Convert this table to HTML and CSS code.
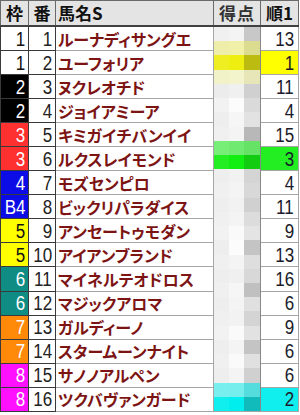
FILE: index.html
```html
<!DOCTYPE html>
<html lang="ja">
<head>
<meta charset="utf-8">
<link rel="stylesheet" href="styles.css">
</head>
<body>
<table class="sheet">
  <colgroup>
    <col class="c-waku"><col class="c-ban"><col class="c-name"><col class="c-score"><col class="c-rank">
  </colgroup>
  <thead>
    <tr>
      <th class="h-waku">枠</th>
      <th class="h-ban">番</th>
      <th class="h-name">馬名S</th>
      <th class="h-score">得点</th>
      <th class="h-rank">順1</th>
    </tr>
  </thead>
  <tbody>
    <tr>
      <td class="waku w1"><span class="num">1</span></td>
      <td class="ban"><span class="num">1</span></td>
      <td class="name">ルーナディサングエ</td>
      <td class="score" rowspan="16">
        <div class="mosaic">
          <i style="background:#f0f0f0"></i><i style="background:#f4f4f4"></i><i style="background:#c8c8c8"></i>
          <i style="background:#eeeeaa"></i><i style="background:#f0f0a8"></i><i style="background:#dcdc90"></i>
          <i style="background:#eeee22"></i><i style="background:#eeee11"></i><i style="background:#bbbb11"></i>
          <i style="background:#f2f2c8"></i><i style="background:#f4f4cc"></i><i style="background:#e6e6b8"></i>
          <i style="background:#ececec"></i><i style="background:#f0f0f0"></i><i style="background:#d0d0d0"></i>
          <i style="background:#f2f2f2"></i><i style="background:#fcfcfc"></i><i style="background:#dadada"></i>
          <i style="background:#eeeeee"></i><i style="background:#f6f6f6"></i><i style="background:#e2e2e2"></i>
          <i style="background:#f0f0f0"></i><i style="background:#f4f4f4"></i><i style="background:#b8b8b8"></i>
          <i style="background:#77ee77"></i><i style="background:#70ea70"></i><i style="background:#66e266"></i>
          <i style="background:#22ee22"></i><i style="background:#11ee11"></i><i style="background:#11cc11"></i>
          <i style="background:#eeeeee"></i><i style="background:#f2f2f2"></i><i style="background:#d4d4d4"></i>
          <i style="background:#f0f0f0"></i><i style="background:#f4f4f4"></i><i style="background:#d8d8d8"></i>
          <i style="background:#eeeeee"></i><i style="background:#f2f2f2"></i><i style="background:#d0d0d0"></i>
          <i style="background:#f0f0f0"></i><i style="background:#f4f4f4"></i><i style="background:#dcdcdc"></i>
          <i style="background:#f2f2f2"></i><i style="background:#fafafa"></i><i style="background:#e4e4e4"></i>
          <i style="background:#eeeeee"></i><i style="background:#fcfcfc"></i><i style="background:#c4c4c4"></i>
          <i style="background:#f0f0f0"></i><i style="background:#f4f4f4"></i><i style="background:#dedede"></i>
          <i style="background:#eeeeee"></i><i style="background:#f0f0f0"></i><i style="background:#d8d8d8"></i>
          <i style="background:#f0f0f0"></i><i style="background:#f6f6f6"></i><i style="background:#c0c0c0"></i>
          <i style="background:#eeeeee"></i><i style="background:#f4f4f4"></i><i style="background:#e0e0e0"></i>
          <i style="background:#f0f0f0"></i><i style="background:#f2f2f2"></i><i style="background:#d4d4d4"></i>
          <i style="background:#f2f2f2"></i><i style="background:#fafafa"></i><i style="background:#e2e2e2"></i>
          <i style="background:#eeeeee"></i><i style="background:#f4f4f4"></i><i style="background:#c4c4c4"></i>
          <i style="background:#f0f0f0"></i><i style="background:#fafafa"></i><i style="background:#e0e0e0"></i>
          <i style="background:#eeeeee"></i><i style="background:#f4f4f4"></i><i style="background:#d0d0d0"></i>
          <i style="background:#78eeee"></i><i style="background:#77eeee"></i><i style="background:#55dddd"></i>
          <i style="background:#11eeee"></i><i style="background:#00eeee"></i><i style="background:#11bbbb"></i>
        </div>
      </td>
      <td class="rank"><span class="num">13</span></td>
    </tr>
    <tr>
      <td class="waku w1"><span class="num">1</span></td>
      <td class="ban"><span class="num">2</span></td>
      <td class="name">ユーフォリア</td>
      <td class="rank r-yellow"><span class="num">1</span></td>
    </tr>
    <tr>
      <td class="waku w2"><span class="num">2</span></td>
      <td class="ban"><span class="num">3</span></td>
      <td class="name">ヌクレオチド</td>
      <td class="rank"><span class="num">11</span></td>
    </tr>
    <tr>
      <td class="waku w2"><span class="num">2</span></td>
      <td class="ban"><span class="num">4</span></td>
      <td class="name">ジョイアミーア</td>
      <td class="rank"><span class="num">4</span></td>
    </tr>
    <tr>
      <td class="waku w3"><span class="num">3</span></td>
      <td class="ban"><span class="num">5</span></td>
      <td class="name">キミガイチバンイイ</td>
      <td class="rank"><span class="num">15</span></td>
    </tr>
    <tr>
      <td class="waku w3"><span class="num">3</span></td>
      <td class="ban"><span class="num">6</span></td>
      <td class="name">ルクスレイモンド</td>
      <td class="rank r-green"><span class="num">3</span></td>
    </tr>
    <tr>
      <td class="waku w4"><span class="num">4</span></td>
      <td class="ban"><span class="num">7</span></td>
      <td class="name">モズセンピロ</td>
      <td class="rank"><span class="num">4</span></td>
    </tr>
    <tr>
      <td class="waku w4"><span class="num">B4</span></td>
      <td class="ban"><span class="num">8</span></td>
      <td class="name">ビックリパラダイス</td>
      <td class="rank"><span class="num">11</span></td>
    </tr>
    <tr>
      <td class="waku w5"><span class="num">5</span></td>
      <td class="ban"><span class="num">9</span></td>
      <td class="name">アンセートゥモダン</td>
      <td class="rank"><span class="num">9</span></td>
    </tr>
    <tr>
      <td class="waku w5"><span class="num">5</span></td>
      <td class="ban"><span class="num">10</span></td>
      <td class="name">アイアンブランド</td>
      <td class="rank"><span class="num">13</span></td>
    </tr>
    <tr>
      <td class="waku w6"><span class="num">6</span></td>
      <td class="ban"><span class="num">11</span></td>
      <td class="name">マイネルテオドロス</td>
      <td class="rank"><span class="num">16</span></td>
    </tr>
    <tr>
      <td class="waku w6"><span class="num">6</span></td>
      <td class="ban"><span class="num">12</span></td>
      <td class="name">マジックアロマ</td>
      <td class="rank"><span class="num">6</span></td>
    </tr>
    <tr>
      <td class="waku w7"><span class="num">7</span></td>
      <td class="ban"><span class="num">13</span></td>
      <td class="name">ガルディーノ</td>
      <td class="rank"><span class="num">9</span></td>
    </tr>
    <tr>
      <td class="waku w7"><span class="num">7</span></td>
      <td class="ban"><span class="num">14</span></td>
      <td class="name">スタームーンナイト</td>
      <td class="rank"><span class="num">6</span></td>
    </tr>
    <tr>
      <td class="waku w8"><span class="num">8</span></td>
      <td class="ban"><span class="num">15</span></td>
      <td class="name">サノノアルペン</td>
      <td class="rank"><span class="num">6</span></td>
    </tr>
    <tr>
      <td class="waku w8"><span class="num">8</span></td>
      <td class="ban"><span class="num">16</span></td>
      <td class="name">ツクバヴァンガード</td>
      <td class="rank r-cyan"><span class="num">2</span></td>
    </tr>
  </tbody>
</table>
</body>
</html>
```

FILE: styles.css
```css
html, body {
  margin: 0;
  padding: 0;
  background: #ffffff;
}

.sheet {
  border-collapse: collapse;
  table-layout: fixed;
  width: 298px;
  font-family: "Liberation Sans", "Noto Sans CJK JP", sans-serif;
}

.c-waku { width: 28px; }
.c-ban { width: 27px; }
.c-name { width: 158px; }
.c-score { width: 47px; }
.c-rank { width: 38px; }

th {
  height: 24px;
  padding: 0;
  background: #e4e4e4;
  border: 1px solid #6a6a6a;
  border-bottom: 2px solid #404040;
  font-family: "Noto Sans CJK JP", sans-serif;
  font-weight: 700;
  font-size: 17px;
  line-height: 20px;
  color: #111;
  text-align: center;
  white-space: nowrap;
  overflow: hidden;
}

.h-name {
  text-align: left;
  padding-left: 2px;
}

.h-score {
  color: #333;
  letter-spacing: 1px;
}

td {
  height: 23px;
  padding: 0;
  border: 1px solid #a6a6a6;
  vertical-align: middle;
  white-space: nowrap;
  overflow: hidden;
}

.num {
  display: inline-block;
  font-family: "Liberation Sans", sans-serif;
  font-size: 20px;
  line-height: 22px;
  transform: scaleX(0.85);
  transform-origin: right center;
}

.waku {
  text-align: right;
  padding-right: 3px;
  border: 1px solid #3a3a3a;
}

.ban {
  text-align: right;
  padding-right: 3px;
  border: 1px solid #3a3a3a;
  color: #222;
  background: #fff;
}

.w1 { background: #ffffff; color: #111; }
.w2 { background: #000000; color: #ffffff; }
.w3 { background: #ff3030; color: #ffffff; }
.w4 { background: #0c0ce6; color: #ffffff; }
.w5 { background: #ffff00; color: #111; }
.w6 { background: #0f8c84; color: #ffffff; }
.w7 { background: #ff8a0a; color: #ffffff; }
.w8 { background: #ff10ff; color: #ffffff; }

.name {
  padding-left: 2px;
  font-family: "Noto Sans CJK JP", sans-serif;
  font-weight: 700;
  font-size: 16px;
  line-height: 22px;
  color: #7d1414;
  font-feature-settings: "palt";
  border-left: 1px solid #3a3a3a;
}

.score {
  padding: 0;
  vertical-align: top;
  border: 1px solid #a6a6a6;
  border-right: 1px solid #888;
}

.mosaic {
  display: grid;
  grid-template-columns: 15px 15px 1fr;
  grid-template-rows: repeat(27, 1fr);
  height: 384px;
}

.mosaic i {
  display: block;
}

.rank {
  text-align: right;
  padding-right: 4px;
  color: #1a1a2a;
  background: #fff;
  border: 1px solid #a6a6a6;
}

.r-yellow { background: #ffff00; }
.r-green { background: #22ee22; }
.r-cyan { background: #11eeee; }
```
